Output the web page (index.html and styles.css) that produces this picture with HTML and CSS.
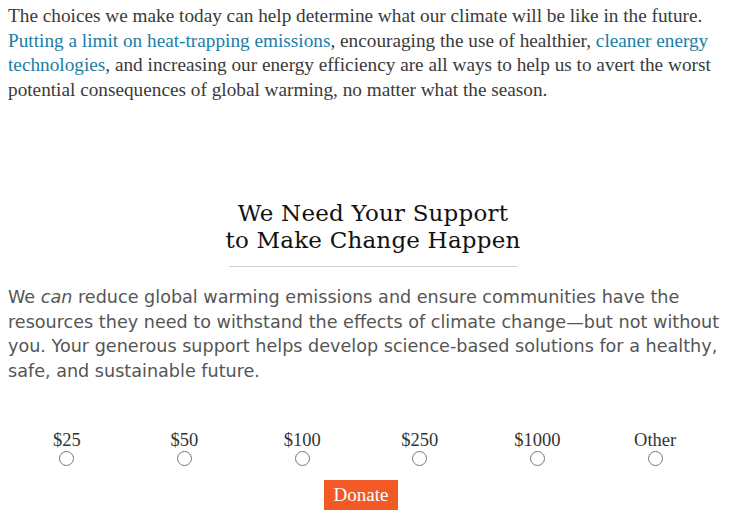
FILE: index.html
```html
<!DOCTYPE html>
<html>
<head>
<meta charset="utf-8">
<link rel="stylesheet" href="styles.css">
</head>
<body>
<div class="page">
  <p class="intro">The choices we make today can help determine what our climate will be like in the future. <a href="#">Putting a limit on heat-trapping emissions</a>, encouraging the use of healthier, <a href="#">cleaner energy technologies</a>, and increasing our energy efficiency are all ways to help us to avert the worst potential consequences of global warming, no matter what the season.</p>
  <h2 class="heading">We Need Your Support<br>to Make Change Happen</h2>
  <p class="body">We <em>can</em> reduce global warming emissions and ensure communities have the resources they need to withstand the effects of climate change—but not without you. Your generous support helps develop science-based solutions for a healthy, safe, and sustainable future.</p>
  <form class="donate">
    <div class="amounts">
      <label class="amount"><span>$25</span><input type="radio" name="amt"></label>
      <label class="amount"><span>$50</span><input type="radio" name="amt"></label>
      <label class="amount"><span>$100</span><input type="radio" name="amt"></label>
      <label class="amount"><span>$250</span><input type="radio" name="amt"></label>
      <label class="amount"><span>$1000</span><input type="radio" name="amt"></label>
      <label class="amount"><span>Other</span><input type="radio" name="amt"></label>
    </div>
    <button type="button" class="btn">Donate</button>
  </form>
</div>
</body>
</html>
```
FILE: styles.css
```css
html, body { margin: 0; padding: 0; background: #fff; }
.page { padding: 0 8px; }
.intro {
  margin: 4px 0 0;
  font-family: "Liberation Serif", serif;
  font-size: 19.25px;
  line-height: 24.7px;
  color: #3a3a3a;
}
.intro a { color: #1a7ea6; text-decoration: none; }
.heading {
  margin: 97px 0 0;
  padding-left: 14px;
  text-align: center;
  white-space: nowrap;
  font-family: "DejaVu Serif", serif;
  font-weight: normal;
  font-size: 23px;
  letter-spacing: 0.2px;
  line-height: 27px;
  color: #111;
}
.heading::after {
  content: "";
  display: block;
  width: 288px;
  height: 1px;
  margin: 12px auto 0;
  background: #cfcfcf;
}
.body {
  margin: 18px 0 0;
  font-family: "DejaVu Sans", sans-serif;
  font-weight: normal;
  font-size: 17.6px;
  line-height: 24.7px;
  color: #555;
}
.body em { font-style: oblique; }
.donate { width: 706px; margin-top: 47px; }
.amounts { display: grid; grid-template-columns: repeat(6, 1fr); }
.amount {
  display: flex; flex-direction: column; align-items: center;
  font-family: "Liberation Serif", serif;
  font-size: 18.5px;
  color: #333;
}
.amount span { line-height: 18px; }
.amount input { margin: 2px 0 0; width: 15px; height: 15px; }
.btn {
  display: block;
  margin: 14px auto 0;
  width: 74px; height: 30px;
  border: 0;
  background: #f15a24;
  color: #fff;
  font-family: "Liberation Serif", serif;
  font-size: 19px;
  padding: 0;
}
```
